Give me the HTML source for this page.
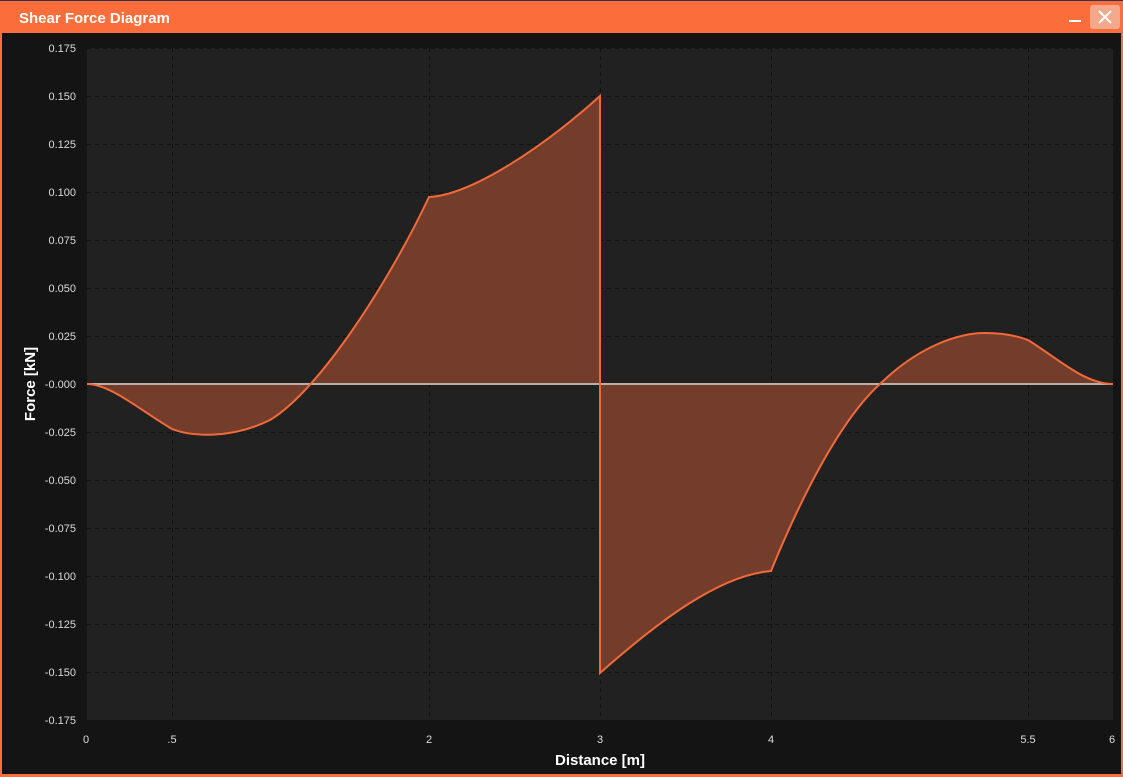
<!DOCTYPE html>
<html><head><style>
html,body{margin:0;padding:0;width:1123px;height:777px;overflow:hidden;background:#fb6d3a;}
</style></head><body>
<svg width="1123" height="777" xmlns="http://www.w3.org/2000/svg" font-family="Liberation Sans, sans-serif">
<rect x="0" y="0" width="1123" height="777" fill="#fb6d3a"/>
<rect x="0" y="0" width="1123" height="1" fill="#2a3550"/>
<text x="19" y="23" font-size="15" font-weight="bold" fill="#fff">Shear Force Diagram</text>
<rect x="1069" y="20" width="12" height="2" fill="#fff"/>
<rect x="1090" y="5" width="30" height="24" rx="3" fill="#f4a88c"/>
<path d="M1099 11 L1111 23 M1111 11 L1099 23" stroke="#fff" stroke-width="2"/>
<rect x="2" y="33" width="1119" height="741" fill="#141414"/>
<rect x="87" y="48" width="1026" height="672" fill="#212121"/>
<g stroke="#111" stroke-width="1" stroke-dasharray="4,4">
<path d="M87 48.5H1113M87 96.5H1113M87 144.5H1113M87 192.5H1113M87 240.5H1113M87 288.5H1113M87 336.5H1113M87 432.5H1113M87 480.5H1113M87 528.5H1113M87 576.5H1113M87 624.5H1113M87 672.5H1113"/>
<path d="M172.5 48V720M429.5 48V720M600.5 48V720M771.5 48V720M1028.5 48V720"/>
</g>
<path d="M87 384 C110 384 140 410 172 429 C190 436 230 440 270 420 C320 390 390 280 429 197 C470 195 540 150 600 96 L600 384 Z" fill="#743c2a"/>
<path d="M600 384 L600 673 C660 620 720 575 771 571 C800 500 840 420 880 384 Z" fill="#743c2a"/>
<path d="M880 384 C920 345 960 333 985 333 C1005 333 1020 337 1028 340 C1060 360 1085 384 1113 384 Z" fill="#743c2a"/>
<line x1="87" y1="384" x2="1113" y2="384" stroke="#b8b0ad" stroke-width="2"/>
<path d="M87 384 C110 384 140 410 172 429 C190 436 230 440 270 420 C320 390 390 280 429 197 C470 195 540 150 600 96 L600 384 L600 673 C660 620 720 575 771 571 C800 500 840 420 880 384 C920 345 960 333 985 333 C1005 333 1020 337 1028 340 C1060 360 1085 384 1113 384" fill="none" stroke="#f26a3a" stroke-width="2"/>
<g font-size="11" fill="#ddd" text-anchor="end">
<text x="76" y="52">0.175</text><text x="76" y="100">0.150</text><text x="76" y="148">0.125</text><text x="76" y="196">0.100</text><text x="76" y="244">0.075</text><text x="76" y="292">0.050</text><text x="76" y="340">0.025</text><text x="76" y="388">-0.000</text><text x="76" y="436">-0.025</text><text x="76" y="484">-0.050</text><text x="76" y="532">-0.075</text><text x="76" y="580">-0.100</text><text x="76" y="628">-0.125</text><text x="76" y="676">-0.150</text><text x="76" y="724">-0.175</text>
</g>
<g font-size="11" fill="#ddd" text-anchor="middle">
<text x="86" y="743">0</text><text x="172" y="743">.5</text><text x="429" y="743">2</text><text x="600" y="743">3</text><text x="771" y="743">4</text><text x="1028" y="743">5.5</text><text x="1112" y="743">6</text>
</g>
<text x="600" y="765" font-size="15" font-weight="bold" fill="#fff" text-anchor="middle">Distance [m]</text>
<text transform="translate(35,384) rotate(-90)" font-size="15" font-weight="bold" fill="#fff" text-anchor="middle">Force [kN]</text>
</svg>
</body></html>
